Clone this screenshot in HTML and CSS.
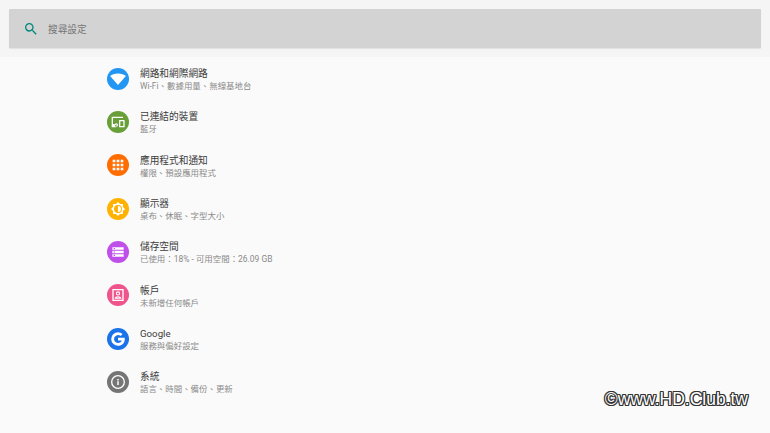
FILE: index.html
```html
<!DOCTYPE html>
<html lang="zh-Hant">
<head>
  <meta charset="UTF-8">
  <title>設定</title>
  <link rel="stylesheet" href="styles.css">
</head>
<body>
  <div class="header">
    <div class="search-bar">
      <svg class="search-icon" viewBox="0 0 24 24"><path d="M15.5 14h-.79l-.28-.27A6.47 6.47 0 0 0 16 9.5 6.5 6.5 0 1 0 9.5 16c1.61 0 3.09-.59 4.23-1.57l.27.28v.79l5 4.99L20.49 19l-4.99-5zm-6 0C7.01 14 5 11.99 5 9.5S7.01 5 9.5 5 14 7.01 14 9.5 11.99 14 9.5 14z"/></svg>
      <span class="search-text">搜尋設定</span>
    </div>
  </div>

  <div class="list">
    <div class="row">
      <div class="icon blue">
        <svg class="wifi" viewBox="0 0 24 24"><path d="M12 20 1.500 8C3.800 6 7.400 4.500 12 4.500S20.200 6 22.500 8z"/></svg>
      </div>
      <div class="text">
        <div class="title">網路和網際網路</div>
        <div class="sub">Wi-Fi、數據用量、無線基地台</div>
      </div>
    </div>

    <div class="row">
      <div class="icon green">
        <svg viewBox="0 0 24 24"><path d="M2.500 4h17v2h-15v9H7v2H2.500zM14.500 9h6.500a1 1 0 0 1 1 1v9a1 1 0 0 1-1 1h-6.500a1 1 0 0 1-1-1v-9a1 1 0 0 1 1-1zm1 2v7h4.500v-7zM2.500 17h7v3h-7zM9.500 14a2.500 2.500 0 1 1 0 5 2.500 2.500 0 0 1 0-5zm0 1.600a.9.900 0 1 0 0 1.800.9.900 0 0 0 0-1.800z" fill-rule="evenodd"/></svg>
      </div>
      <div class="text">
        <div class="title">已連結的裝置</div>
        <div class="sub">藍牙</div>
      </div>
    </div>

    <div class="row">
      <div class="icon orange">
        <svg viewBox="0 0 24 24"><path d="M4 4h4v4H4zM10 4h4v4h-4zM16 4h4v4h-4zM4 10h4v4H4zM10 10h4v4h-4zM16 10h4v4h-4zM4 16h4v4H4zM10 16h4v4h-4zM16 16h4v4h-4z"/></svg>
      </div>
      <div class="text">
        <div class="title">應用程式和通知</div>
        <div class="sub">權限、預設應用程式</div>
      </div>
    </div>

    <div class="row">
      <div class="icon yellow">
        <svg viewBox="0 0 24 24"><path d="M12 1.500 15 4.600h4.400V9l3.100 3-3.100 3v4.400H15L12 22.500 9 19.400H4.600V15L1.500 12 4.600 9V4.600H9zM12 6a6 6 0 1 0 0 12 6 6 0 0 0 0-12z" fill-rule="evenodd"/><path d="M12 7.500a4.500 4.500 0 0 1 0 9z"/></svg>
      </div>
      <div class="text">
        <div class="title">顯示器</div>
        <div class="sub">桌布、休眠、字型大小</div>
      </div>
    </div>

    <div class="row">
      <div class="icon purple">
        <svg viewBox="0 0 24 24"><path d="M3.500 5h17v3.800h-17zM3.500 10.100h17v3.800h-17zM3.500 15.200h17V19h-17zM5.500 6v1.600h2V6zM5.500 11.200v1.600h2v-1.600zM5.500 16.300v1.600h2v-1.600z" fill-rule="evenodd"/></svg>
      </div>
      <div class="text">
        <div class="title">儲存空間</div>
        <div class="sub">已使用：18% - 可用空間：26.09 GB</div>
      </div>
    </div>

    <div class="row">
      <div class="icon pink">
        <svg viewBox="0 0 24 24"><path d="M3.500 3h17v18h-17zM5.500 5v14h13V5zM12 6.500a3.200 3.200 0 1 1 0 6.400 3.200 3.200 0 0 1 0-6.400zm0 1.600a1.600 1.600 0 1 0 0 3.200 1.600 1.600 0 0 0 0-3.200zM6.800 17.500c0-2.400 3.200-3.500 5.200-3.500s5.200 1.100 5.200 3.500zm2.400-1.300h5.600c-.7-.5-1.800-.9-2.800-.9s-2.100.4-2.800.9z" fill-rule="evenodd"/></svg>
      </div>
      <div class="text">
        <div class="title">帳戶</div>
        <div class="sub">未新增任何帳戶</div>
      </div>
    </div>

    <div class="row">
      <div class="icon google">
        <svg viewBox="0 0 24 24"><path d="M22 10H12v4.200h5.700c-.8 2.400-3 3.800-5.700 3.800a6 6 0 1 1 3.900-10.600l3-3A10.200 10.200 0 0 0 12 1.800a10.200 10.200 0 1 0 0 20.400c5.900 0 10.200-4.100 10.200-10.200 0-.7-.1-1.400-.2-2z"/></svg>
      </div>
      <div class="text">
        <div class="title">Google</div>
        <div class="sub">服務與偏好設定</div>
      </div>
    </div>

    <div class="row">
      <div class="icon gray">
        <svg viewBox="0 0 24 24"><path d="M12 1.500a10.500 10.500 0 1 0 0 21 10.500 10.500 0 0 0 0-21zm0 2a8.500 8.500 0 1 1 0 17 8.500 8.500 0 0 1 0-17zM10.900 7.500h2.200v2.200h-2.200zM10.900 11h2.200v5.500h-2.200z" fill-rule="evenodd"/></svg>
      </div>
      <div class="text">
        <div class="title">系統</div>
        <div class="sub">語言、時間、備份、更新</div>
      </div>
    </div>
  </div>

  <div class="watermark">©www.HD.Club.tw</div>
</body>
</html>
```

FILE: styles.css
```css
body {
  font-family: Roboto, 'Noto Sans CJK TC', sans-serif;
  background-color: #fafafa;
  margin: 0;
  height: 433px;
  overflow: hidden;
  position: relative;
}

.header {
  background-color: #f5f5f5;
  padding: 9px;
}

.search-bar {
  display: flex;
  align-items: center;
  height: 39px;
  background-color: #d3d3d3;
  border-radius: 1px;
  box-shadow: 0 1px 1px rgba(0, 0, 0, 0.08);
}

.search-icon {
  width: 16px;
  height: 16px;
  margin-left: 14px;
  fill: #00897b;
}

.search-text {
  margin-left: 9px;
  font-size: 9.7px;
  color: #757575;
}

.list {
  padding: 0 0 0 107px;
}

.row {
  display: flex;
  align-items: center;
  height: 43.33px;
}

.icon {
  width: 22px;
  height: 22px;
  border-radius: 50%;
  display: flex;
  align-items: center;
  justify-content: center;
  flex-shrink: 0;
}

.icon svg {
  width: 16px;
  height: 16px;
  fill: #fff;
}

.icon .wifi {
  width: 18px;
  height: 18px;
}

.blue { background-color: #2196f3; }
.green { background-color: #689f38; }
.orange { background-color: #ff6d00; }
.yellow { background-color: #ffb300; }
.purple { background-color: #bf4fe8; }
.pink { background-color: #f0548c; }
.google { background-color: #1a73e8; }
.gray { background-color: #757575; }

.text {
  margin-left: 11px;
  padding-top: 2px;
}

.title {
  font-size: 9.7px;
  line-height: 14px;
  color: #3c3c3c;
}

.sub {
  font-size: 8.45px;
  line-height: 11px;
  color: #8a8a8a;
}

/* 浮水印 */
.watermark {
  position: absolute;
  right: 22px;
  top: 391px;
  font-family: 'Liberation Sans', sans-serif;
  font-size: 17.5px;
  line-height: 17px;
  color: #fff;
  text-shadow: -1px -1px 0 #333, 1px -1px 0 #333, -1px 1px 0 #333, 1px 1px 0 #333, 0 -1px 0 #333, 0 1px 0 #333, -1px 0 0 #333, 1px 0 0 #333;
}
```
